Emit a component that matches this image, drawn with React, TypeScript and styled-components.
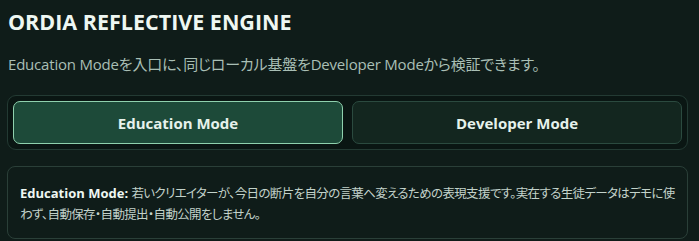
import React, { FC, ReactElement, useState } from 'react';
import styled, { createGlobalStyle, css } from 'styled-components';

type Mode = 'education' | 'developer';

interface ModeButtonProps {
  active?: boolean;
};

const GlobalStyle = createGlobalStyle`
  html, body {
    margin: 0;
    padding: 0;
    background: #0f1c19;
  }

  body {
    font-family: "Open Sans", "Noto Sans CJK JP", sans-serif;
    font-feature-settings: "palt";
    color: #e6f2ec;
  }
`;

const Page = styled.main`
  display: flex;
  flex-direction: column;
  padding: 8px 11px 0 7px;
`;

const Title = styled.h1`
  margin: 0 0 0 1px;
  font-size: 21.5px;
  line-height: 28px;
  font-weight: 700;
  color: #eef7f2;
`;

const Lead = styled.p`
  margin: 18px 0 0 1px;
  font-size: 15px;
  line-height: 20px;
  letter-spacing: -0.2px;
  color: #a9bfb5;
`;

const Toggle = styled.div`
  display: grid;
  grid-template-columns: 1fr 1fr;
  gap: 9px;
  margin-top: 21px;
  padding: 5px;
  background: #0a1613;
  border: 1px solid #233a33;
  border-radius: 9px;
`;

const ModeButton = styled.button<ModeButtonProps>`
  height: 43px;
  font-family: inherit;
  font-size: 15px;
  font-weight: 700;
  color: #e6f2ec;
  background: #13261f;
  border: 1px solid #2b4a3f;
  border-radius: 7px;
  cursor: pointer;

  ${({ active }) =>
  active &&
  css`
    background: #1d4a39;
    border-color: #8fd1ae;
  `}
`;

const Note = styled.div`
  margin-top: 16px;
  padding: 16px 12px 13px 12px;
  border: 1px solid #2a3f38;
  border-radius: 8px;
  font-size: 13px;
  line-height: 20px;
  color: #c2d2ca;
`;

const NoteLabel = styled.strong`
  font-weight: 700;
  color: #eef7f2;
`;

const NoteBody = styled.span`
  font-size: 12.5px;
  letter-spacing: -0.65px;
`;

const App: FC = (): ReactElement => {
  const [mode, setMode] = useState<Mode>('education');

  return (
    <>
      <GlobalStyle />
      <Page>
        <Title>ORDIA REFLECTIVE ENGINE</Title>
        <Lead>Education Modeを入口に、同じローカル基盤をDeveloper Modeから検証できます。</Lead>
        <Toggle>
          <ModeButton active={mode === 'education'} onClick={() => setMode('education')}>
            Education Mode
          </ModeButton>
          <ModeButton active={mode === 'developer'} onClick={() => setMode('developer')}>
            Developer Mode
          </ModeButton>
        </Toggle>
        <Note>
          <NoteLabel>Education Mode:</NoteLabel>{' '}
          <NoteBody>
            若いクリエイターが、今日の断片を自分の言葉へ変えるための表現支援です。実在する生徒データはデモに使わず、自動保存・自動提出・自動公開をしません。
          </NoteBody>
        </Note>
      </Page>
    </>
  );
};

export default App;
